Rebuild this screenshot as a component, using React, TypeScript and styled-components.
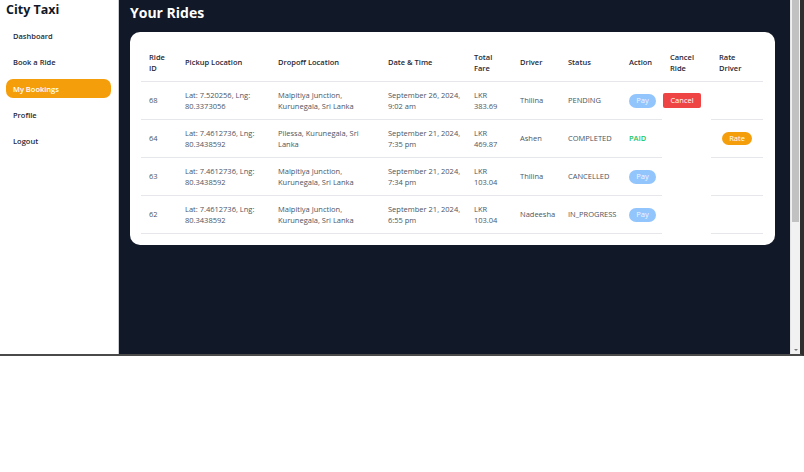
import React from 'react';
import styled, { createGlobalStyle } from 'styled-components';

type Ride = {
  id: number;
  pickup: string;
  dropoff: string;
  date: string;
  fare: string;
  driver: string;
  status: string;
  paid: boolean;
  canCancel: boolean;
  canRate: boolean;
};

const rides: Ride[] = [
  {
    id: 68,
    pickup: 'Lat: 7.520256, Lng: 80.3373056',
    dropoff: 'Malpitiya Junction, Kurunegala, Sri Lanka',
    date: 'September 26, 2024, 9:02 am',
    fare: 'LKR 383.69',
    driver: 'Thilina',
    status: 'PENDING',
    paid: false,
    canCancel: true,
    canRate: false
  },
  {
    id: 64,
    pickup: 'Lat: 7.4612736, Lng: 80.3438592',
    dropoff: 'Pilessa, Kurunegala, Sri Lanka',
    date: 'September 21, 2024, 7:35 pm',
    fare: 'LKR 469.87',
    driver: 'Ashen',
    status: 'COMPLETED',
    paid: true,
    canCancel: false,
    canRate: true
  },
  {
    id: 63,
    pickup: 'Lat: 7.4612736, Lng: 80.3438592',
    dropoff: 'Malpitiya Junction, Kurunegala, Sri Lanka',
    date: 'September 21, 2024, 7:34 pm',
    fare: 'LKR 103.04',
    driver: 'Thilina',
    status: 'CANCELLED',
    paid: false,
    canCancel: false,
    canRate: false
  },
  {
    id: 62,
    pickup: 'Lat: 7.4612736, Lng: 80.3438592',
    dropoff: 'Malpitiya Junction, Kurunegala, Sri Lanka',
    date: 'September 21, 2024, 6:55 pm',
    fare: 'LKR 103.04',
    driver: 'Nadeesha',
    status: 'IN_PROGRESS',
    paid: false,
    canCancel: false,
    canRate: false
  }
];

const columns = [36, 93, 110, 86, 46, 48, 61, 41, 49, 52];

const navItems = ['Dashboard', 'Book a Ride', 'My Bookings', 'Profile', 'Logout'];

const App: React.FC = () => {
  return (
    <>
      <GlobalStyle />
      <Frame>
        <Sidebar>
          <Brand>City Taxi</Brand>
          <Nav>
            {navItems.map(item => (
              <NavItem key={item} $active={item === 'My Bookings'}>
                {item}
              </NavItem>
            ))}
          </Nav>
        </Sidebar>
        <Main>
          <PageTitle>Your Rides</PageTitle>
          <Card>
            <Table>
              <colgroup>
                {columns.map((w, i) => (
                  <col key={i} style={{ width: w }} />
                ))}
              </colgroup>
              <thead>
                <tr>
                  <Th>Ride ID</Th>
                  <Th>Pickup Location</Th>
                  <Th>Dropoff Location</Th>
                  <Th>Date &amp; Time</Th>
                  <Th>Total Fare</Th>
                  <Th>Driver</Th>
                  <Th>Status</Th>
                  <Th>Action</Th>
                  <Th>Cancel Ride</Th>
                  <Th>Rate Driver</Th>
                </tr>
              </thead>
              <tbody>
                {rides.map(ride => (
                  <tr key={ride.id}>
                    <Td>{ride.id}</Td>
                    <Td>{ride.pickup}</Td>
                    <Td>{ride.dropoff}</Td>
                    <Td $tight>{ride.date}</Td>
                    <Td>{ride.fare}</Td>
                    <Td>{ride.driver}</Td>
                    <Td>{ride.status}</Td>
                    <Td>{ride.paid ? <Paid>PAID</Paid> : <PayButton>Pay</PayButton>}</Td>
                    <CancelCell>{ride.canCancel && <CancelButton>Cancel</CancelButton>}</CancelCell>
                    <RateCell>{ride.canRate && <RateButton>Rate</RateButton>}</RateCell>
                  </tr>
                ))}
              </tbody>
            </Table>
          </Card>
        </Main>
        <ScrollTrack>
          <ScrollThumb />
          <ScrollArrow />
        </ScrollTrack>
      </Frame>
    </>
  );
};

const GlobalStyle = createGlobalStyle`
  html, body {
    margin: 0;
    padding: 0;
    background: #ffffff;
  }
  body {
    font-family: "Open Sans", "Noto Sans", sans-serif;
    -webkit-font-smoothing: antialiased;
  }
  * {
    box-sizing: border-box;
  }
`;

const Frame = styled.div`
  display: flex;
  width: 804px;
  height: 356px;
  border-right: 4px solid #2e2e2e;
  border-bottom: 2px solid #4a4a4a;
  overflow: hidden;
`;

const Sidebar = styled.aside`
  width: 119px;
  flex-shrink: 0;
  background: #ffffff;
  border-right: 1px solid #c9cdd3;
  padding: 1px 7px 0 6px;
`;

const Brand = styled.div`
  font-size: 12.5px;
  line-height: 17px;
  font-weight: 700;
  color: #111827;
`;

const Nav = styled.nav`
  display: flex;
  flex-direction: column;
  gap: 7.3px;
  margin-top: 8.5px;
`;

const NavItem = styled.div<{ $active?: boolean }>`
  height: 19px;
  display: flex;
  align-items: center;
  padding: 0 7px;
  border-radius: 7px;
  font-size: 7.5px;
  font-weight: 600;
  color: ${p => (p.$active ? '#ffffff' : '#1f2937')};
  background: ${p => (p.$active ? '#f59e0b' : 'transparent')};
`;

const Main = styled.main`
  flex: 1;
  background: #111827;
  padding: 3px 15px 0 11px;
`;

const PageTitle = styled.h1`
  margin: 0 0 9px;
  font-size: 14px;
  line-height: 20px;
  font-weight: 700;
  color: #ffffff;
`;

const Card = styled.div`
  background: #ffffff;
  border-radius: 10px;
  padding: 12px 11px 11px;
`;

const Table = styled.table`
  width: 622px;
  table-layout: fixed;
  border-collapse: collapse;
  font-size: 7.5px;
  line-height: 11px;
`;

const Th = styled.th`
  text-align: left;
  vertical-align: middle;
  padding: 7.5px 8px;
  font-weight: 600;
  color: #1f2937;
  border-bottom: 1px solid #e5e7eb;
`;

const Td = styled.td<{ $tight?: boolean }>`
  vertical-align: middle;
  padding: 7.5px ${p => (p.$tight ? '3px' : '8px')} 7.5px 8px;
  color: #4b5563;
  border-bottom: 1px solid #e5e7eb;
`;

const CancelCell = styled.td`
  vertical-align: middle;
  padding: 0;
`;

const RateCell = styled(Td)`
  text-align: center;
  padding: 7.5px 0;
`;

const PillButton = styled.button`
  border: none;
  padding: 0;
  font-family: inherit;
  font-size: 7.5px;
  line-height: 1;
  color: #ffffff;
  cursor: pointer;
  vertical-align: middle;
`;

const PayButton = styled(PillButton)`
  width: 27px;
  height: 14px;
  border-radius: 7px;
  background: #93c5fd;
  color: #eef5ff;
`;

const CancelButton = styled(PillButton)`
  width: 38px;
  height: 15px;
  border-radius: 2px;
  background: #ef4444;
  margin-left: 1px;
`;

const RateButton = styled(PillButton)`
  width: 30px;
  height: 13px;
  border-radius: 7px;
  background: #f59e0b;
`;

const Paid = styled.span`
  color: #22c55e;
  font-weight: 600;
`;

const ScrollTrack = styled.div`
  width: 10px;
  flex-shrink: 0;
  background: #f1f1f1;
  display: flex;
  flex-direction: column;
  border-left: 1px solid #e4e4e4;
`;

const ScrollThumb = styled.div`
  height: 222px;
  margin: 0 1px;
  background: #c1c1c1;
`;

const ScrollArrow = styled.div`
  margin-top: auto;
  margin-bottom: 3px;
  align-self: center;
  width: 0;
  height: 0;
  border-left: 2px solid transparent;
  border-right: 2px solid transparent;
  border-top: 2px solid #7a7a7a;
`;

export default App;
